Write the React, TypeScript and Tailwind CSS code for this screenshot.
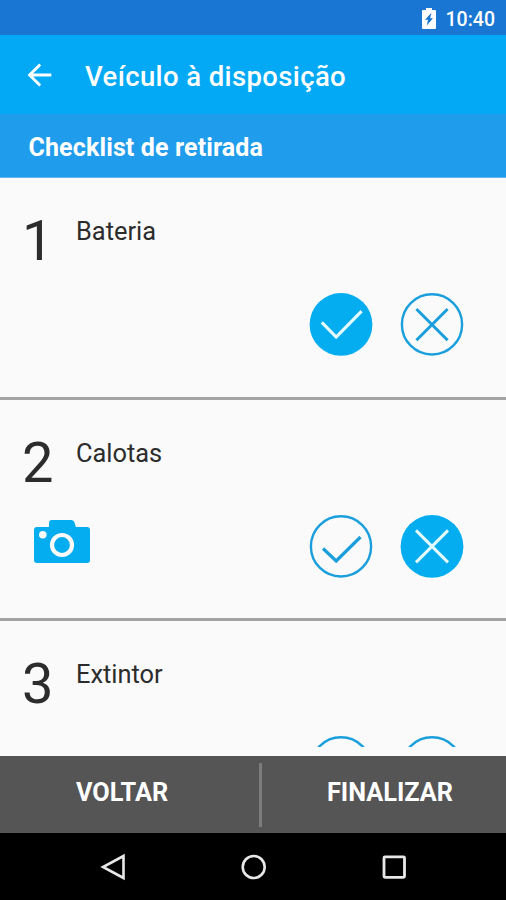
import type { ReactNode } from "react";

type Answer = "ok" | "fail" | null;

function Choice({ kind, filled }: { kind: "ok" | "fail"; filled: boolean }) {
  return (
    <svg viewBox="0 0 64 64" className="block h-16 w-16 shrink-0" fill="none">
      <circle
        cx="32"
        cy="32.4"
        r={filled ? 31.4 : 30.1}
        fill={filled ? "#03adef" : "none"}
        stroke={filled ? "none" : "#1a9fdc"}
        strokeWidth="2.4"
      />
      {kind === "ok" ? (
        <path
          d={filled ? "M12.8 30.4 L27.2 45 L52.6 19.2" : "M14 34.5 L27.2 47 L51.5 23"}
          stroke={filled ? "#e4fbff" : "#1a9fdc"}
          strokeWidth="3.2"
        />
      ) : (
        <path
          d={filled ? "M16 16.4 L48 48.4 M48 16.4 L16 48.4" : "M16.4 17 L47.6 48.2 M47.6 17 L16.4 48.2"}
          stroke={filled ? "#e4fbff" : "#1a9fdc"}
          strokeWidth="3"
        />
      )}
    </svg>
  );
}

function Camera() {
  return (
    <svg viewBox="0 0 56 44" className="block h-11 w-14">
      <path
        d="M3 8 H15 V4 Q15 1 18 1 H37 Q40 1 41 5 L41.8 8 H53 Q56 8 56 11 V41 Q56 44 53 44 H3 Q0 44 0 41 V11 Q0 8 3 8 Z"
        fill="#03adef"
      />
      <circle cx="8.8" cy="15.7" r="3.8" fill="#fafafa" />
      <circle cx="28" cy="26" r="10" fill="none" stroke="#fafafa" strokeWidth="4.2" />
    </svg>
  );
}

function Item({ n, label, answer, children }: { n: number; label: string; answer: Answer; children?: ReactNode }) {
  return (
    <section className="flex h-[221.5px] shrink-0 flex-col border-b-[3px] border-[#a3a3a3]">
      <div className="flex h-[114px] shrink-0 pl-[22px] pt-[34px] text-[#2c2c2c]">
        <span className="w-[54px] pt-px text-[56px] leading-[56px]">{n}</span>
        <span className="pt-1 text-[25.4px] leading-[30px]">{label}</span>
      </div>
      <div className="flex h-16 shrink-0 items-start justify-between pl-[34px] pr-[42px]">
        <div className="pt-[5.5px]">{children}</div>
        <div className="flex gap-[27.5px]">
          <Choice kind="ok" filled={answer === "ok"} />
          <Choice kind="fail" filled={answer === "fail"} />
        </div>
      </div>
    </section>
  );
}

export default function App() {
  return (
    <div className="flex h-[900px] w-[506px] flex-col overflow-hidden bg-[#fafafa] font-['Roboto',sans-serif]">
      <div className="flex h-[35px] shrink-0 items-center justify-end bg-[#1976d2] pr-[11px] pt-[2px] text-white">
        <svg viewBox="0 0 14 21" className="mr-[10px] h-[21px] w-[14px]">
          <path
            d="M1 2 H4 V0 H10 V2 H13 Q14 2 14 3 V20 Q14 21 13 21 H1 Q0 21 0 20 V3 Q0 2 1 2Z"
            fill="#fff"
          />
          <path d="M9.4 4.8 L3 11.8 H6 L4.8 17.4 L11 10.2 H8.2 Z" fill="#1976d2" />
        </svg>
        <span className="pt-[2px] text-[19.5px] font-medium leading-6">10:40</span>
      </div>
      <header className="flex h-[79px] shrink-0 items-center bg-[#03a9f4] pl-7 text-white">
        <svg viewBox="0 0 24 24" className="h-6 w-6" fill="none" stroke="#fff" strokeWidth="2.8">
          <path d="M23.3 12 H2 M12.2 1.4 L1.6 12 L12.2 22.6" />
        </svg>
        <h1 className="ml-[33px] pt-1 text-[27.5px] font-medium leading-8 tracking-[0.38px]">Veículo à disposição</h1>
      </header>
      <div className="flex h-16 shrink-0 items-center border-b border-[#62b5ee] bg-[#209cec] pl-[28.5px] pt-[4px] text-[25px] font-bold tracking-[0.13px] text-white">
        Checklist de retirada
      </div>
      <main className="h-[569px] shrink-0 overflow-hidden">
        <Item n={1} label="Bateria" answer="ok" />
        <Item n={2} label="Calotas" answer="fail">
          <Camera />
        </Item>
        <Item n={3} label="Extintor" answer={null} />
      </main>
      <div className="h-[9px] shrink-0" />
      <footer className="flex h-[77px] shrink-0 items-center bg-[#555] text-[25.3px] font-bold text-white">
        <button className="w-[259px] pb-[4px] pr-[15px] text-center">VOLTAR</button>
        <div className="h-16 w-[3px] bg-[#7c7c7c]" />
        <button className="flex-1 pb-[4px] pl-[12px] text-center">FINALIZAR</button>
      </footer>
      <nav className="flex h-[67px] shrink-0 items-center bg-black pl-[100px]">
        <svg viewBox="0 0 28 28" className="mr-[112px] h-7 w-7" fill="none" stroke="#e8e8e8" strokeWidth="2.6">
          <path d="M23.5 3 V25 L3 14 Z" />
        </svg>
        <svg viewBox="0 0 28 28" className="mr-[112px] h-7 w-7" fill="none" stroke="#e8e8e8" strokeWidth="2.6">
          <circle cx="13.7" cy="14" r="11" />
        </svg>
        <svg viewBox="0 0 28 28" className="h-7 w-7" fill="none" stroke="#e8e8e8" strokeWidth="2.8">
          <rect x="4" y="3.8" width="20.5" height="20.5" rx="1" />
        </svg>
      </nav>
    </div>
  );
}
